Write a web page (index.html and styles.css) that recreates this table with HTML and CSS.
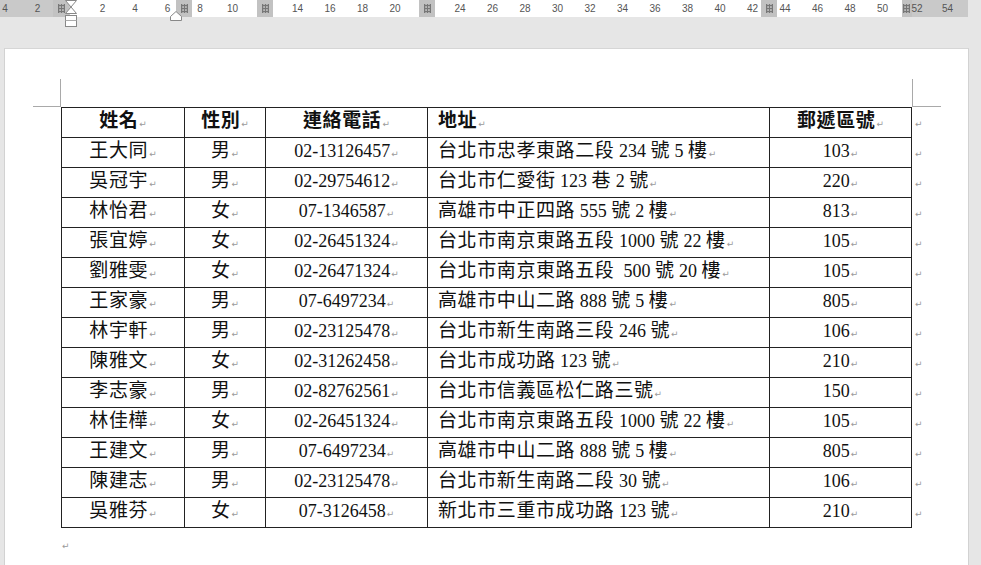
FILE: index.html
```html
<!DOCTYPE html>
<html lang="zh-Hant">
<head>
<meta charset="utf-8">
<title>通訊錄</title>
<link rel="stylesheet" href="styles.css">
</head>
<body>
<div class="ruler">
  <div class="ruler-nums">
    <span>4</span><span>2</span><span></span><span>2</span><span>4</span><span>6</span><span>8</span><span>10</span><span></span><span>14</span><span>16</span><span>18</span><span>20</span><span></span><span>24</span><span>26</span><span>28</span><span>30</span><span>32</span><span>34</span><span>36</span><span>38</span><span>40</span><span>42</span><span>44</span><span>46</span><span>48</span><span>50</span><span class="n52">52</span><span>54</span>
  </div>
  <div class="colmark" style="left:53px"><svg viewBox="0 0 7 9" width="7" height="9"><g fill="#777"><rect x="0" y="0" width="1.3" height="9"/><rect x="2.85" y="0" width="1.3" height="9"/><rect x="5.7" y="0" width="1.3" height="9"/><rect x="0" y="1" width="7" height="1.1"/><rect x="0" y="4" width="7" height="1.1"/><rect x="0" y="7" width="7" height="1.1"/></g></svg></div>
  <div class="colmark" style="left:176px"><svg viewBox="0 0 7 9" width="7" height="9"><g fill="#777"><rect x="0" y="0" width="1.3" height="9"/><rect x="2.85" y="0" width="1.3" height="9"/><rect x="5.7" y="0" width="1.3" height="9"/><rect x="0" y="1" width="7" height="1.1"/><rect x="0" y="4" width="7" height="1.1"/><rect x="0" y="7" width="7" height="1.1"/></g></svg></div>
  <div class="colmark" style="left:257px"><svg viewBox="0 0 7 9" width="7" height="9"><g fill="#777"><rect x="0" y="0" width="1.3" height="9"/><rect x="2.85" y="0" width="1.3" height="9"/><rect x="5.7" y="0" width="1.3" height="9"/><rect x="0" y="1" width="7" height="1.1"/><rect x="0" y="4" width="7" height="1.1"/><rect x="0" y="7" width="7" height="1.1"/></g></svg></div>
  <div class="colmark" style="left:419px"><svg viewBox="0 0 7 9" width="7" height="9"><g fill="#777"><rect x="0" y="0" width="1.3" height="9"/><rect x="2.85" y="0" width="1.3" height="9"/><rect x="5.7" y="0" width="1.3" height="9"/><rect x="0" y="1" width="7" height="1.1"/><rect x="0" y="4" width="7" height="1.1"/><rect x="0" y="7" width="7" height="1.1"/></g></svg></div>
  <div class="colmark" style="left:761px"><svg viewBox="0 0 7 9" width="7" height="9"><g fill="#777"><rect x="0" y="0" width="1.3" height="9"/><rect x="2.85" y="0" width="1.3" height="9"/><rect x="5.7" y="0" width="1.3" height="9"/><rect x="0" y="1" width="7" height="1.1"/><rect x="0" y="4" width="7" height="1.1"/><rect x="0" y="7" width="7" height="1.1"/></g></svg></div>
  <div class="colmark colmark-end" style="left:902px"><svg viewBox="0 0 7 9" width="7" height="9"><g fill="#777"><rect x="0" y="0" width="1.3" height="9"/><rect x="2.85" y="0" width="1.3" height="9"/><rect x="5.7" y="0" width="1.3" height="9"/><rect x="0" y="1" width="7" height="1.1"/><rect x="0" y="4" width="7" height="1.1"/><rect x="0" y="7" width="7" height="1.1"/></g></svg></div>
  <svg class="indent-left" width="14" height="28" viewBox="0 0 14 28">
    <path d="M1.5 0.5 L12.5 0.5 L7 7 Z" fill="#fff" stroke="#888"/>
    <path d="M7 7 L12.5 13.5 L1.5 13.5 Z" fill="#fff" stroke="#888"/>
    <rect x="1.5" y="15.5" width="11" height="11" fill="#fff" stroke="#888"/>
    <line x1="1.5" y1="20.5" x2="12.5" y2="20.5" stroke="#aaa"/>
  </svg>
  <svg class="indent-cell" width="12" height="10" viewBox="0 0 12 10">
    <path d="M0.5 9.5 L0.5 5.5 L6 0.5 L11.5 5.5 L11.5 9.5 Z" fill="#fff" stroke="#888"/>
  </svg>
</div>

<div class="workspace">
  <div class="page">
    <div class="crop crop-tl-v"></div>
    <div class="crop crop-tl-h"></div>
    <div class="crop crop-tr-v"></div>
    <div class="crop crop-tr-h"></div>

    <table class="roster">
      <colgroup>
        <col class="c-name"><col class="c-sex"><col class="c-tel"><col class="c-addr"><col class="c-zip"><col class="c-eor">
      </colgroup>
      <thead>
        <tr>
          <th>姓名<span class="pm">↵</span></th>
          <th>性別<span class="pm">↵</span></th>
          <th>連絡電話<span class="pm">↵</span></th>
          <th class="left">地址<span class="pm">↵</span></th>
          <th>郵遞區號<span class="pm">↵</span></th>
          <td class="eor"><span class="pm">↵</span></td>
        </tr>
      </thead>
      <tbody>
        <tr><td>王大同<span class="pm">↵</span></td><td>男<span class="pm">↵</span></td><td class="num">02-13126457<span class="pm">↵</span></td><td class="left">台北市忠孝東路二段<span class="num"> 234 </span>號<span class="num"> 5 </span>樓<span class="pm">↵</span></td><td class="num">103<span class="pm">↵</span></td><td class="eor"><span class="pm">↵</span></td></tr>
        <tr><td>吳冠宇<span class="pm">↵</span></td><td>男<span class="pm">↵</span></td><td class="num">02-29754612<span class="pm">↵</span></td><td class="left">台北市仁愛街<span class="num"> 123 </span>巷<span class="num"> 2 </span>號<span class="pm">↵</span></td><td class="num">220<span class="pm">↵</span></td><td class="eor"><span class="pm">↵</span></td></tr>
        <tr><td>林怡君<span class="pm">↵</span></td><td>女<span class="pm">↵</span></td><td class="num">07-1346587<span class="pm">↵</span></td><td class="left">高雄市中正四路<span class="num"> 555 </span>號<span class="num"> 2 </span>樓<span class="pm">↵</span></td><td class="num">813<span class="pm">↵</span></td><td class="eor"><span class="pm">↵</span></td></tr>
        <tr><td>張宜婷<span class="pm">↵</span></td><td>女<span class="pm">↵</span></td><td class="num">02-26451324<span class="pm">↵</span></td><td class="left">台北市南京東路五段<span class="num"> 1000 </span>號<span class="num"> 22 </span>樓<span class="pm">↵</span></td><td class="num">105<span class="pm">↵</span></td><td class="eor"><span class="pm">↵</span></td></tr>
        <tr><td>劉雅雯<span class="pm">↵</span></td><td>女<span class="pm">↵</span></td><td class="num">02-26471324<span class="pm">↵</span></td><td class="left">台北市南京東路五段<span class="num">  500 </span>號<span class="num"> 20 </span>樓<span class="pm">↵</span></td><td class="num">105<span class="pm">↵</span></td><td class="eor"><span class="pm">↵</span></td></tr>
        <tr><td>王家豪<span class="pm">↵</span></td><td>男<span class="pm">↵</span></td><td class="num">07-6497234<span class="pm">↵</span></td><td class="left">高雄市中山二路<span class="num"> 888 </span>號<span class="num"> 5 </span>樓<span class="pm">↵</span></td><td class="num">805<span class="pm">↵</span></td><td class="eor"><span class="pm">↵</span></td></tr>
        <tr><td>林宇軒<span class="pm">↵</span></td><td>男<span class="pm">↵</span></td><td class="num">02-23125478<span class="pm">↵</span></td><td class="left">台北市新生南路三段<span class="num"> 246 </span>號<span class="pm">↵</span></td><td class="num">106<span class="pm">↵</span></td><td class="eor"><span class="pm">↵</span></td></tr>
        <tr><td>陳雅文<span class="pm">↵</span></td><td>女<span class="pm">↵</span></td><td class="num">02-31262458<span class="pm">↵</span></td><td class="left">台北市成功路<span class="num"> 123 </span>號<span class="pm">↵</span></td><td class="num">210<span class="pm">↵</span></td><td class="eor"><span class="pm">↵</span></td></tr>
        <tr><td>李志豪<span class="pm">↵</span></td><td>男<span class="pm">↵</span></td><td class="num">02-82762561<span class="pm">↵</span></td><td class="left">台北市信義區松仁路三號<span class="pm">↵</span></td><td class="num">150<span class="pm">↵</span></td><td class="eor"><span class="pm">↵</span></td></tr>
        <tr><td>林佳樺<span class="pm">↵</span></td><td>女<span class="pm">↵</span></td><td class="num">02-26451324<span class="pm">↵</span></td><td class="left">台北市南京東路五段<span class="num"> 1000 </span>號<span class="num"> 22 </span>樓<span class="pm">↵</span></td><td class="num">105<span class="pm">↵</span></td><td class="eor"><span class="pm">↵</span></td></tr>
        <tr><td>王建文<span class="pm">↵</span></td><td>男<span class="pm">↵</span></td><td class="num">07-6497234<span class="pm">↵</span></td><td class="left">高雄市中山二路<span class="num"> 888 </span>號<span class="num"> 5 </span>樓<span class="pm">↵</span></td><td class="num">805<span class="pm">↵</span></td><td class="eor"><span class="pm">↵</span></td></tr>
        <tr><td>陳建志<span class="pm">↵</span></td><td>男<span class="pm">↵</span></td><td class="num">02-23125478<span class="pm">↵</span></td><td class="left">台北市新生南路二段<span class="num"> 30 </span>號<span class="pm">↵</span></td><td class="num">106<span class="pm">↵</span></td><td class="eor"><span class="pm">↵</span></td></tr>
        <tr><td>吳雅芬<span class="pm">↵</span></td><td>女<span class="pm">↵</span></td><td class="num">07-3126458<span class="pm">↵</span></td><td class="left">新北市三重市成功路<span class="num"> 123 </span>號<span class="pm">↵</span></td><td class="num">210<span class="pm">↵</span></td><td class="eor"><span class="pm">↵</span></td></tr>
      </tbody>
    </table>
    <div class="para-end"><span class="pm">↵</span></div>
  </div>
</div>
</body>
</html>
```

FILE: styles.css
```css
* { box-sizing: border-box; }
html, body {
  margin: 0;
  padding: 0;
  width: 981px;
  height: 565px;
  overflow: hidden;
  background: #e6e6e6;
}

/* ---------- ruler ---------- */
.ruler {
  position: relative;
  height: 17px;
  background: linear-gradient(to right,
    #c9c9c9 0, #c9c9c9 70px,
    #ffffff 70px, #ffffff 902px,
    #c9c9c9 902px, #c9c9c9 968px,
    #e6e6e6 968px);
  font-family: "Liberation Sans", Arial, sans-serif;
  font-size: 10px;
  color: #555;
}
.ruler-nums {
  position: relative;
  z-index: 1;
  display: flex;
  margin-left: -11.25px;
  height: 17px;
  align-items: center;
}
.ruler-nums span {
  flex: 0 0 32.5px;
  text-align: center;
}
.ruler-nums .n52 { padding-left: 4px; }
.colmark {
  position: absolute;
  top: 0;
  width: 16px;
  height: 17px;
  background: #c2c2c2;
  display: flex;
  align-items: center;
  justify-content: center;
}
.colmark-end {
  width: 10px;
  justify-content: flex-start;
  padding-left: 1px;
}
.indent-left {
  position: absolute;
  z-index: 2;
  left: 64px;
  top: 0;
}
.indent-cell {
  position: absolute;
  z-index: 2;
  left: 170px;
  top: 11px;
}

/* ---------- workspace / page ---------- */
.workspace {
  height: 548px;
  padding: 31px 12px 0 4px;
}
.page {
  position: relative;
  background: #fff;
  border-top: 1px solid #d6d6d6;
  border-left: 1px solid #d2d2d2;
  border-right: 1px solid #d2d2d2;
  height: 540px;
  padding: 58px 0 0 56px;
}
.crop {
  position: absolute;
  background: #a9a9a9;
}
.crop-tl-v { left: 55px; top: 30px; width: 1px; height: 28px; }
.crop-tl-h { left: 28px; top: 57px; width: 28px; height: 1px; }
.crop-tr-v { left: 907px; top: 30px; width: 1px; height: 28px; }
.crop-tr-h { left: 907px; top: 57px; width: 29px; height: 1px; }

/* ---------- table ---------- */
.roster {
  border-collapse: collapse;
  table-layout: fixed;
  width: 872px;
  font-family: "Liberation Serif", "Noto Sans CJK TC", serif;
  font-size: 19px;
  letter-spacing: 0.6px;
  color: #111;
}
.c-name { width: 123px; }
.c-sex { width: 81px; }
.c-tel { width: 162px; }
.c-addr { width: 342px; }
.c-zip { width: 142px; }
.c-eor { width: 22px; }

.roster tr { height: 30px; }
.roster th,
.roster td {
  border: 1px solid #222;
  padding: 0;
  line-height: 22px;
  text-align: center;
  vertical-align: middle;
  white-space: pre;
  overflow: hidden;
}
.roster th {
  font-weight: 700;
}
.roster .left {
  text-align: left;
  padding-left: 10px;
}
.roster .num {
  font-size: 18px;
  letter-spacing: 0;
}
.roster td.eor {
  border: none;
  text-align: left;
  padding-left: 2px;
}
.pm {
  font-family: "DejaVu Sans", sans-serif;
  font-size: 9px;
  font-weight: 400;
  letter-spacing: 0;
  color: #9a9a9a;
  margin-left: 1px;
}
.para-end {
  margin-top: 8px;
  line-height: 16px;
}
```
